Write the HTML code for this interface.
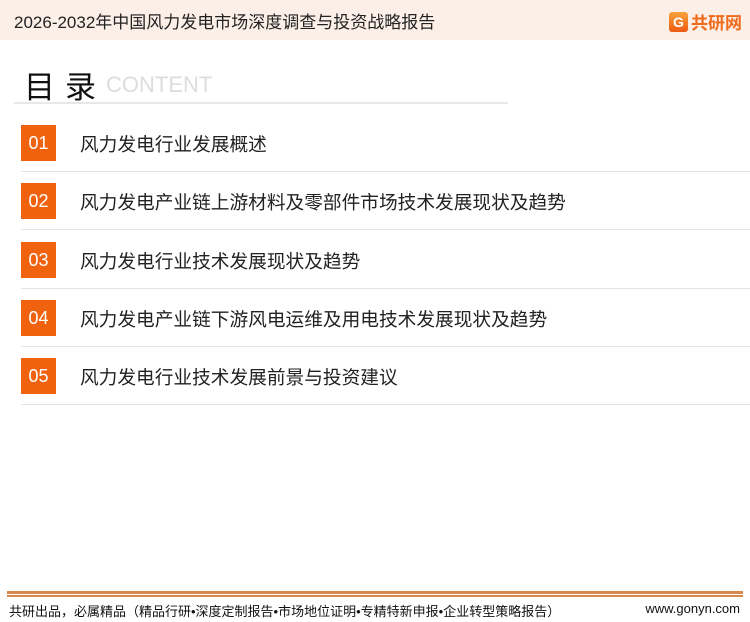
<!DOCTYPE html>
<html><head><meta charset="utf-8"><style>
*{margin:0;padding:0;box-sizing:border-box}
body{width:750px;height:622px;background:#fff;position:relative;overflow:hidden;font-family:"Liberation Sans","Noto Sans CJK SC",sans-serif;color:#222}
.hd{position:absolute;left:0;top:0;width:750px;height:40px;background:#fcefe8}
.ht{position:absolute;left:14px;top:8px;font-size:17px;color:#222}
.logo{position:absolute;right:8px;top:9px;font-size:17px;font-weight:bold;color:#f06a1a;display:flex;align-items:center;gap:3px}
.g{width:19px;height:20px;background:linear-gradient(#f7a23a,#ee5a12);border-radius:3px;color:#fff;font-size:14px;text-align:center;line-height:20px}
.t1{position:absolute;left:24px;top:62px;font-size:31px;color:#111;letter-spacing:10px}
.t2{position:absolute;left:106px;top:72px;font-size:22px;color:#ddd}
.tl{position:absolute;left:14px;top:102px;width:494px;height:2px;background:#e8e8e8}
.row{position:absolute;left:21px;height:36px}
.num{position:absolute;left:0;top:0;width:35px;height:36px;background:#f0620e;color:#fff;font-size:18px;text-align:center;line-height:36px}
.txt{position:absolute;left:59px;top:5px;font-size:18.7px;white-space:nowrap;color:#222}
.sep{position:absolute;left:21px;width:729px;height:1px;background:#e4e4e4}
.fl{position:absolute;left:7px;width:736px;background:#d88a4e}
.ft{position:absolute;left:9px;top:601px;font-size:13px;color:#111}
.fw{position:absolute;right:10px;top:601px;font-size:13px;color:#111}
</style></head><body>
<div class="hd"></div>
<div class="ht">2026-2032年中国风力发电市场深度调查与投资战略报告</div>
<div class="logo"><div class="g">G</div>共研网</div>
<div class="t1">目录</div>
<div class="t2">CONTENT</div>
<div class="tl"></div>
<div class="row" style="top:125px"><div class="num">01</div><div class="txt">风力发电行业发展概述</div></div>
<div class="sep" style="top:171px"></div>
<div class="row" style="top:183px"><div class="num">02</div><div class="txt">风力发电产业链上游材料及零部件市场技术发展现状及趋势</div></div>
<div class="sep" style="top:229px"></div>
<div class="row" style="top:242px"><div class="num">03</div><div class="txt">风力发电行业技术发展现状及趋势</div></div>
<div class="sep" style="top:288px"></div>
<div class="row" style="top:300px"><div class="num">04</div><div class="txt">风力发电产业链下游风电运维及用电技术发展现状及趋势</div></div>
<div class="sep" style="top:346px"></div>
<div class="row" style="top:358px"><div class="num">05</div><div class="txt">风力发电行业技术发展前景与投资建议</div></div>
<div class="sep" style="top:404px"></div>
<div class="fl" style="top:591px;height:3px"></div>
<div class="fl" style="top:595px;height:2px"></div>
<div class="ft">共研出品，必属精品（精品行研•深度定制报告•市场地位证明•专精特新申报•企业转型策略报告）</div>
<div class="fw">www.gonyn.com</div>
</body></html>
